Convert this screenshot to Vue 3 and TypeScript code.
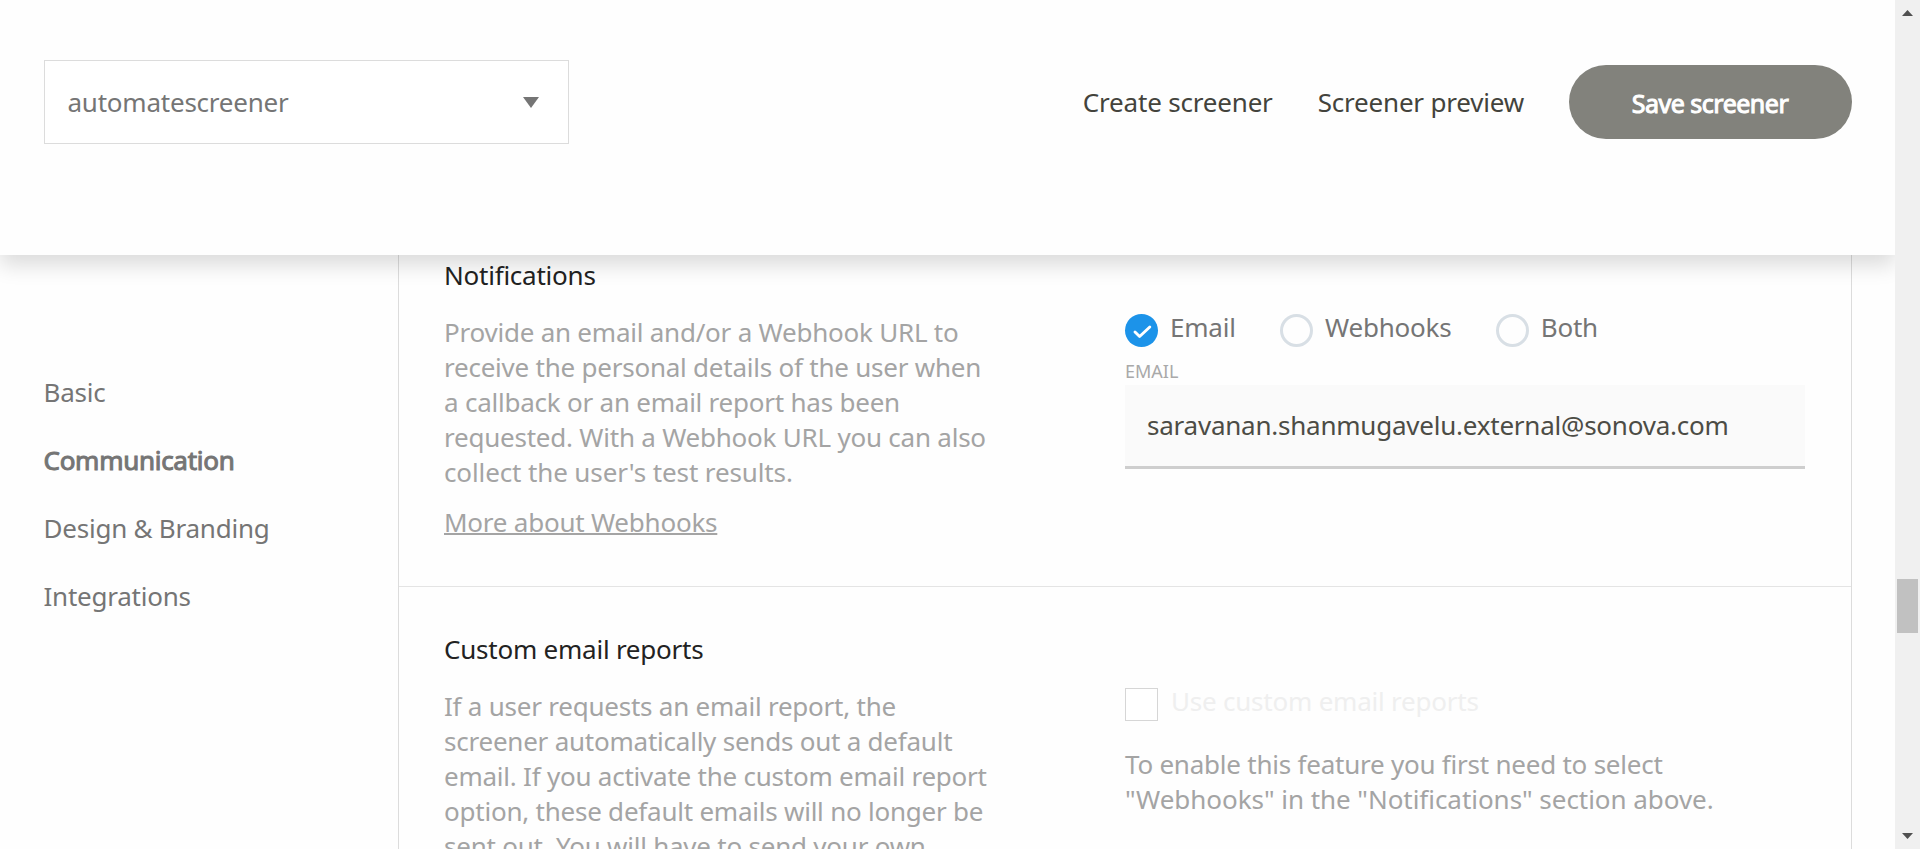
<script setup lang="ts">
import { ref } from 'vue'

type Channel = 'Email' | 'Webhooks' | 'Both'

const sections: string[] = ['Basic', 'Communication', 'Design & Branding', 'Integrations']
const activeSection = ref<string>('Communication')
const channels: Channel[] = ['Email', 'Webhooks', 'Both']
const channel = ref<Channel>('Email')
const email = ref<string>('saravanan.shanmugavelu.external@sonova.com')
</script>

<template>
  <div class="window">
    <div class="page">
      <header class="header">
        <button class="select" type="button">
          <span>automatescreener</span>
          <svg class="caret" width="16" height="11" viewBox="0 0 16 11"><path d="M0 0H16L8 11Z" fill="#757575" /></svg>
        </button>
        <nav class="actions">
          <a class="action">Create screener</a>
          <a class="action">Screener preview</a>
          <button class="save" type="button">Save screener</button>
        </nav>
      </header>

      <main class="body">
        <aside class="sidebar">
          <a
            v-for="name in sections"
            :key="name"
            class="side-link"
            :class="{ active: name === activeSection }"
            @click="activeSection = name"
          >{{ name }}</a>
        </aside>

        <div class="panel">
          <section class="row first">
            <div class="info">
              <h3>Notifications</h3>
              <p>Provide an email and/or a Webhook URL to<br />receive the personal details of the user when<br />a callback or an email report has been<br />requested. With a Webhook URL you can also<br /><span class="loose">collect the user's test results.</span></p>
              <a class="more">More about Webhooks</a>
            </div>
            <div class="fields">
              <div class="radios">
                <div v-for="c in channels" :key="c" class="option" @click="channel = c">
                  <span class="radio" :class="{ checked: c === channel }">
                    <svg v-if="c === channel" width="33" height="33" viewBox="0 0 33 33">
                      <path d="M10 18L14.6 22.5L24.8 13" fill="none" stroke="#fff" stroke-width="2.9" stroke-linecap="round" stroke-linejoin="round" />
                    </svg>
                  </span>
                  <span class="label">{{ c }}</span>
                </div>
              </div>
              <div class="caption">EMAIL</div>
              <input v-model="email" class="input" type="text" spellcheck="false" />
            </div>
          </section>

          <section class="row">
            <div class="info">
              <h3>Custom email reports</h3>
              <p>If a user requests an email report, the<br />screener automatically sends out a default<br />email. If you activate the custom email report<br />option, these default emails will no longer be<br />sent out. You will have to send your own</p>
            </div>
            <div class="fields">
              <div class="option disabled">
                <span class="checkbox"></span>
                <span class="label">Use custom email reports</span>
              </div>
              <p class="hint">To enable this feature you first need to select<br /><span class="looser">"Webhooks" in the "Notifications" section above.</span></p>
            </div>
          </section>
        </div>
      </main>
    </div>

    <div class="scrollbar">
      <svg class="arrow" width="11" height="6" viewBox="0 0 11 6"><path d="M0 6L5.5 0L11 6Z" fill="#505050" /></svg>
      <div class="thumb"></div>
      <svg class="arrow" width="11" height="6" viewBox="0 0 11 6"><path d="M0 0H11L5.5 6Z" fill="#505050" /></svg>
    </div>
  </div>
</template>

<style>
body {
  margin: 0;
  overflow: hidden;
}
</style>

<style scoped>
.window {
  display: flex;
  width: 1920px;
  height: 849px;
  overflow: hidden;
  background: #fefefe;
  font-family: "Noto Sans", "Open Sans", sans-serif;
  font-size: 26px;
  line-height: 35px;
  letter-spacing: -0.23px;
  color: #757575;
}
.window * {
  box-sizing: border-box;
}
.page {
  display: flex;
  flex-direction: column;
  width: 1895px;
  height: 849px;
  overflow: hidden;
}
.header {
  position: relative;
  z-index: 2;
  display: flex;
  flex: none;
  align-items: flex-start;
  justify-content: space-between;
  height: 255px;
  padding: 60px 43px 0 44px;
  background: #fefefe;
  box-shadow: 0 10px 20px rgba(0, 0, 0, 0.14);
}
.select {
  display: flex;
  align-items: center;
  justify-content: space-between;
  width: 525px;
  height: 84px;
  padding: 0 29px 0 22.5px;
  border: 1px solid #dcdcdc;
  background: #fff;
  font: inherit;
  letter-spacing: inherit;
  color: #757575;
}
.caret {
  display: block;
}
.actions {
  display: flex;
  align-items: center;
  gap: 45px;
  height: 84px;
}
.action {
  letter-spacing: -0.19px;
  color: #43433c;
  white-space: nowrap;
}
.save {
  width: 283px;
  height: 74px;
  padding: 2px 1px 0 0;
  border: 0;
  border-radius: 37px;
  background: #82827c;
  font: inherit;
  font-size: 25px;
  letter-spacing: -0.5px;
  color: #fff;
  -webkit-text-stroke: 1px #fff;
}
.body {
  display: flex;
  flex: 1;
  min-height: 0;
}
.sidebar {
  display: flex;
  flex: none;
  flex-direction: column;
  gap: 33px;
  width: 398px;
  padding: 120px 0 0 43.5px;
}
.side-link.active {
  letter-spacing: -0.28px;
  -webkit-text-stroke: 1px #757575;
}
.panel {
  flex: none;
  width: 1454px;
  border: solid #dcdcdc;
  border-width: 0 1px;
}
.row {
  display: flex;
  padding: 45px 45px 0;
}
.row.first {
  height: 332px;
  padding-top: 3px;
  border-bottom: 1px solid #e4e4e4;
}
.info {
  width: 681px;
}
h3 {
  margin: 0;
  font-size: 26px;
  font-weight: 400;
  color: #222;
}
p {
  margin: 22px 0 0;
  color: #a4a4a4;
  white-space: nowrap;
}
.loose {
  letter-spacing: -0.12px;
}
.looser {
  letter-spacing: -0.04px;
}
.more {
  display: block;
  width: max-content;
  margin-top: 15px;
  color: #a4a4a4;
  text-decoration: underline;
  text-decoration-thickness: 2px;
}
.fields {
  width: 680px;
  padding-top: 52px;
}
.radios {
  display: flex;
  gap: 44.4px;
}
.option {
  display: flex;
  gap: 12px;
  height: 37px;
  white-space: nowrap;
}
.radio,
.checkbox {
  flex: none;
  width: 33px;
  height: 33px;
  margin-top: 4px;
}
.radio {
  border: 3px solid #d8dfe5;
  border-radius: 50%;
}
.radio.checked {
  border: 0;
  background: #1c93e9;
}
.radio svg {
  display: block;
}
.caption {
  height: 38px;
  padding-top: 12px;
  font-size: 18px;
  line-height: 25px;
  letter-spacing: 0;
  color: #a9a9a9;
}
.input {
  display: block;
  width: 680px;
  height: 84px;
  padding: 0 22px 2px;
  border: 0;
  border-bottom: 3px solid #cecece;
  border-radius: 0;
  outline: 0;
  background: #fafafa;
  font: inherit;
  letter-spacing: inherit;
  color: #4c4c45;
}
.checkbox {
  border: 1px solid #d6d6d6;
  background: #fff;
}
.disabled .label {
  padding-left: 1px;
  letter-spacing: -0.22px;
  color: #efefef;
}
.hint {
  margin-top: 26px;
}
.scrollbar {
  display: flex;
  flex: none;
  flex-direction: column;
  align-items: center;
  width: 25px;
  height: 849px;
  padding: 10px 0;
  background: #f0f0f0;
}
.arrow {
  display: block;
  flex: none;
}
.thumb {
  width: 21px;
  height: 54px;
  margin: 563px 0 200px;
  background: #c1c1c1;
}
</style>
